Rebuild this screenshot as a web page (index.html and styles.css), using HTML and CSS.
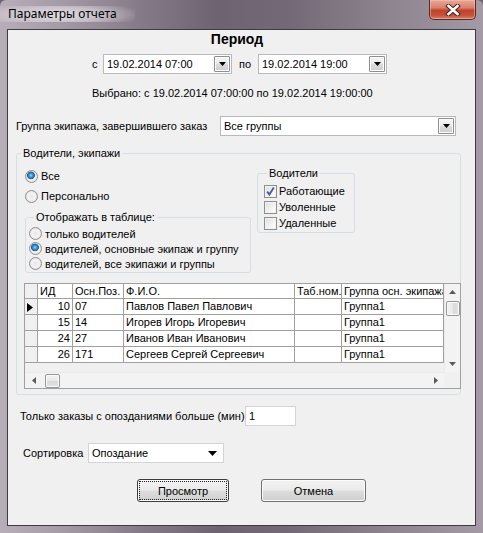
FILE: index.html
```html
<!DOCTYPE html>
<html lang="ru">
<head>
<meta charset="utf-8">
<title>Параметры отчета</title>
<link rel="stylesheet" href="styles.css">
</head>
<body>
<div class="window">
  <div class="titlebar">
    <span class="title">Параметры отчета</span>
    <div class="close-btn">
      <svg width="16" height="12" viewBox="0 0 16 12"><path d="M3.5 2 L12.5 10 M12.5 2 L3.5 10" stroke="#4a2424" stroke-width="4.6" stroke-linecap="square" fill="none"/><path d="M3.5 2 L12.5 10 M12.5 2 L3.5 10" stroke="#ffffff" stroke-width="2.6" stroke-linecap="square" fill="none"/></svg>
    </div>
  </div>
  <div class="client">
    <div class="period-title">Период</div>
    <div class="period-row">
      <span class="lbl-c">с</span>
      <div class="combo date">
        <span class="combo-text">19.02.2014 07:00</span>
        <span class="dd-btn"><svg width="7" height="4" viewBox="0 0 7 4"><path d="M0 0 H7 L3.5 4 Z" fill="#000"/></svg></span>
      </div>
      <span class="lbl-po">по</span>
      <div class="combo date">
        <span class="combo-text">19.02.2014 19:00</span>
        <span class="dd-btn"><svg width="7" height="4" viewBox="0 0 7 4"><path d="M0 0 H7 L3.5 4 Z" fill="#000"/></svg></span>
      </div>
    </div>
    <div class="selected">Выбрано: с 19.02.2014 07:00:00 по 19.02.2014 19:00:00</div>
    <div class="group-row">
      <span class="group-lbl">Группа экипажа, завершившего заказ</span>
      <div class="combo group">
        <span class="combo-text">Все группы</span>
        <span class="dd-btn"><svg width="7" height="4" viewBox="0 0 7 4"><path d="M0 0 H7 L3.5 4 Z" fill="#000"/></svg></span>
      </div>
    </div>

    <fieldset class="gbox drivers">
      <legend>Водители, экипажи</legend>
      <div class="top-area">
        <div class="left-col">
          <div class="radio-row"><span class="radio on"></span><span>Все</span></div>
          <div class="radio-row"><span class="radio"></span><span>Персонально</span></div>
          <fieldset class="gbox show">
            <legend>Отображать в таблице:</legend>
            <div class="radio-row small"><span class="radio"></span><span>только водителей</span></div>
            <div class="radio-row small"><span class="radio on"></span><span>водителей, основные экипаж и группу</span></div>
            <div class="radio-row small"><span class="radio"></span><span>водителей, все экипажи и группы</span></div>
          </fieldset>
        </div>
        <fieldset class="gbox drv">
          <legend>Водители</legend>
          <div class="check-row"><span class="check"><svg width="11" height="11" viewBox="0 0 11 11"><path d="M2.2 5.6 L4.4 8.6 L8.8 1.6" stroke="#4b5b9a" stroke-width="1.8" fill="none"/></svg></span><span>Работающие</span></div>
          <div class="check-row"><span class="check"></span><span>Уволенные</span></div>
          <div class="check-row"><span class="check"></span><span>Удаленные</span></div>
        </fieldset>
      </div>

      <div class="grid">
        <div class="grid-body">
          <table class="dgv">
            <thead>
              <tr>
                <th class="rh w0"></th>
                <th class="w1">ИД</th>
                <th class="w2">Осн.Поз.</th>
                <th class="w3">Ф.И.О.</th>
                <th class="w4">Таб.ном.</th>
                <th class="w5">Группа осн. экипажа</th>
              </tr>
            </thead>
            <tbody>
              <tr><td class="rh"><svg width="6" height="9" viewBox="0 0 6 9"><path d="M0 0 L6 4.5 L0 9 Z" fill="#000"/></svg></td><td class="num">10</td><td>07</td><td>Павлов Павел Павлович</td><td></td><td>Группа1</td></tr>
              <tr><td class="rh"></td><td class="num">15</td><td>14</td><td>Игорев Игорь Игоревич</td><td></td><td>Группа1</td></tr>
              <tr><td class="rh"></td><td class="num">24</td><td>27</td><td>Иванов Иван Иванович</td><td></td><td>Группа1</td></tr>
              <tr><td class="rh"></td><td class="num">26</td><td>171</td><td>Сергеев Сергей Сергеевич</td><td></td><td>Группа1</td></tr>
            </tbody>
          </table>
        </div>
        <div class="vscroll">
          <span class="arr"><svg width="7" height="4" viewBox="0 0 7 4"><path d="M0 4 H7 L3.5 0 Z" fill="#5a5a5a"/></svg></span>
          <span class="vthumb"></span>
          <span class="vfill"></span>
          <span class="arr"><svg width="7" height="4" viewBox="0 0 7 4"><path d="M0 0 H7 L3.5 4 Z" fill="#5a5a5a"/></svg></span>
        </div>
        <div class="hscroll">
          <span class="harr"><svg width="4" height="7" viewBox="0 0 4 7"><path d="M4 0 V7 L0 3.5 Z" fill="#5a5a5a"/></svg></span>
          <span class="hthumb"></span>
          <span class="hfill"></span>
          <span class="harr"><svg width="4" height="7" viewBox="0 0 4 7"><path d="M0 0 V7 L4 3.5 Z" fill="#5a5a5a"/></svg></span>
        </div>
        <div class="corner"></div>
      </div>
    </fieldset>

    <div class="late-row">
      <span class="late-lbl">Только заказы с опозданиями больше (мин)</span>
      <div class="textbox">1</div>
    </div>
    <div class="sort-row">
      <span class="sort-lbl">Сортировка</span>
      <div class="combo sort">
        <span class="combo-text">Опоздание</span>
        <span class="flat-arr"><svg width="9" height="5" viewBox="0 0 9 5"><path d="M0 0 H9 L4.5 5 Z" fill="#000"/></svg></span>
      </div>
    </div>
    <div class="buttons">
      <div class="btn default"><span class="focus">Просмотр</span></div>
      <div class="btn cancel">Отмена</div>
    </div>
  </div>
</div>
</body>
</html>
```
FILE: styles.css
```css
* { box-sizing: border-box; }
html, body { margin: 0; padding: 0; }
body {
  font-family: "Liberation Sans", Arial, sans-serif;
  font-size: 11px;
  color: #000;
  background: #6f6572;
}
.window {
  width: 483px;
  height: 533px;
  display: flex;
  flex-direction: column;
  border-radius: 6px 6px 0 0;
  background:
    linear-gradient(90deg, #b8aeb9 0%, #a69ca8 12%, #877d8a 28%, #6e6471 45%, #746a77 60%, #8d838f 80%, #a39aa5 100%);
}
.titlebar {
  height: 29px;
  display: flex;
  align-items: flex-start;
  justify-content: space-between;
}
.title {
  font-family: "Noto Sans", "Liberation Sans", sans-serif;
  font-size: 12px;
  line-height: 16px;
  color: #000;
  margin: 6px 0 0 0;
  padding: 0 18px 0 8px;
  background: radial-gradient(ellipse 60% 90% at 45% 55%, rgba(235,230,236,0.85) 0%, rgba(235,230,236,0.5) 55%, rgba(235,230,236,0) 100%);
}
.close-btn {
  width: 47px;
  height: 20px;
  margin-right: 7px;
  border: 1px solid #5b2a24;
  border-top: none;
  border-radius: 0 0 5px 5px;
  background: linear-gradient(#e9a898 0%, #d9826f 40%, #c0432c 55%, #c4513a 80%, #d8846c 100%);
  box-shadow: inset 0 0 0 1px rgba(255,200,190,0.45);
  display: flex;
  align-items: center;
  justify-content: center;
}
.client {
  flex: 1;
  margin: 0 7px 7px 7px;
  border: 1px solid #3f3b42;
  background: #f0f0f0;
  display: flex;
  flex-direction: column;
}
.period-title {
  margin-top: 1px;
  height: 16px;
  line-height: 16px;
  font-size: 14px;
  font-weight: bold;
  text-align: center;
  padding-right: 9px;
}
.period-row {
  margin-top: 7px;
  height: 20px;
  display: flex;
  align-items: center;
  padding-left: 84px;
}
.lbl-c { width: 11px; }
.lbl-po { width: 19px; margin-left: 7px; }
.combo {
  height: 20px;
  border: 1px solid #b7b9bd;
  background: #fff;
  display: flex;
  align-items: center;
  justify-content: space-between;
}
.combo.date { width: 129px; }
.combo-text { padding-left: 3px; white-space: nowrap; }
.dd-btn {
  width: 16px;
  height: 16px;
  margin-right: 1px;
  border: 1px solid #8e8f8f;
  border-radius: 1px;
  background: linear-gradient(#f6f6f6 0%, #e9e9e9 50%, #dcdcdc 51%, #cfcfcf 100%);
  box-shadow: inset 0 0 0 1px #fbfbfb;
  display: flex;
  align-items: center;
  justify-content: center;
}
.selected {
  margin-top: 12px;
  line-height: 14px;
  height: 14px;
  padding-left: 84px;
}
.group-row {
  margin-top: 16px;
  height: 20px;
  display: flex;
  align-items: center;
  padding-left: 8px;
}
.group-lbl { width: 204px; white-space: nowrap; }
.combo.group { width: 236px; }
.gbox {
  margin: 0;
  padding: 0;
  min-width: 0;
  border: 1px solid #d5dfe5;
  border-radius: 3px;
}
.gbox legend {
  padding: 0 2px;
  line-height: 14px;
  height: 14px;
}
.drivers {
  margin: 10px 14px 0 8px;
  padding-bottom: 5px;
}
.drivers > legend { margin-left: 4px; }
.top-area {
  margin-top: 6px;
  display: flex;
  align-items: flex-start;
}
.left-col {
  margin-left: 8px;
  width: 226px;
}
.radio-row {
  height: 20px;
  display: flex;
  align-items: center;
  white-space: nowrap;
}
.radio-row.small { height: 15px; }
.radio {
  width: 13px;
  height: 13px;
  border-radius: 50%;
  border: 1px solid #8e8f8f;
  background: radial-gradient(circle at 50% 50%, #e6e6e6 0%, #f4f4f4 45%, #d4d4d4 100%);
  margin-right: 3px;
  flex: none;
}
.radio.on {
  background:
    radial-gradient(circle at 45% 40%, #9bd3f5 0px, #3d8fd0 2px, #1d5e98 3.6px, rgba(0,0,0,0) 4.2px),
    radial-gradient(circle at 50% 50%, #e6e6e6 0%, #f4f4f4 45%, #d4d4d4 100%);
}
.show {
  margin-top: 4px;
  width: 226px;
  padding: 2px 0 1px 3px;
}
.show > legend { margin-left: 5px; }
.drv {
  margin-left: 6px;
  width: 98px;
  padding: 3px 0 1px 6px;
}
.drv > legend { margin-left: 3px; }
.check-row {
  height: 16px;
  display: flex;
  align-items: center;
  white-space: nowrap;
}
.check {
  width: 13px;
  height: 13px;
  border: 1px solid #8e8f8f;
  background: linear-gradient(135deg, #dcdcdc 0%, #f4f4f4 60%, #ffffff 100%);
  box-shadow: inset 0 0 0 1px #f2f2f2;
  margin-right: 2px;
  flex: none;
  display: flex;
  align-items: center;
  justify-content: center;
}
.grid {
  margin: 10px 0 0 7px;
  width: 437px;
  height: 106px;
  border: 1px solid #a0a0a0;
  display: grid;
  grid-template-columns: 1fr 16px;
  grid-template-rows: 1fr 16px;
  background: #f0f0f0;
}
.grid-body { overflow: hidden; background: #f0f0f0; }
.dgv {
  border-collapse: separate;
  border-spacing: 0;
  table-layout: fixed;
  width: 419px;
}
.dgv th, .dgv td {
  border-right: 1px solid #a0a0a0;
  border-bottom: 1px solid #a0a0a0;
  padding: 0 0 0 2px;
  font-weight: normal;
  text-align: left;
  white-space: nowrap;
  overflow: hidden;
  background: #fff;
}
.dgv th { height: 15px; line-height: 14px; }
.dgv td { height: 16px; line-height: 15px; }
.dgv .rh { background: #f0f0f0; padding: 0; }
.dgv td.rh svg { display: block; margin: 1px 0 0 2px; }
.dgv td.num { text-align: right; padding: 0 2px 0 0; }
.w0 { width: 13px; }
.w1 { width: 35px; }
.w2 { width: 51px; }
.w3 { width: 171px; }
.w4 { width: 47px; }
.w5 { width: 102px; }
.vscroll {
  background: #f3f3f3;
  border-left: 1px solid #eaeaea;
  display: flex;
  flex-direction: column;
  align-items: center;
}
.arr {
  height: 16px;
  width: 15px;
  display: flex;
  align-items: center;
  justify-content: center;
  flex: none;
}
.vthumb {
  width: 14px;
  height: 15px;
  margin-top: 1px;
  border: 1px solid #979797;
  border-radius: 2px;
  background: linear-gradient(90deg, #f2f2f2 0%, #e9e9e9 50%, #d8d8d8 51%, #e4e4e4 100%);
  box-shadow: inset 0 0 0 1px #fafafa;
  flex: none;
}
.vfill { flex: 1; }
.hscroll {
  background: #f3f3f3;
  border-top: 1px solid #eaeaea;
  display: flex;
  align-items: center;
}
.harr {
  width: 17px;
  height: 15px;
  display: flex;
  align-items: center;
  justify-content: center;
  flex: none;
}
.hthumb {
  width: 15px;
  height: 14px;
  margin-left: 3px;
  border: 1px solid #979797;
  border-radius: 2px;
  background: linear-gradient(#f2f2f2 0%, #e9e9e9 50%, #d8d8d8 51%, #e4e4e4 100%);
  box-shadow: inset 0 0 0 1px #fafafa;
  flex: none;
}
.hfill { flex: 1; }
.corner { background: #f0f0f0; }
.late-row {
  margin-top: 11px;
  height: 20px;
  display: flex;
  align-items: center;
  padding-left: 12px;
}
.late-lbl { width: 225px; white-space: nowrap; }
.textbox {
  width: 51px;
  height: 20px;
  border: 1px solid #d2d4d8;
  background: #fff;
  padding-left: 3px;
  line-height: 18px;
}
.sort-row {
  margin-top: 17px;
  height: 20px;
  display: flex;
  align-items: center;
  padding-left: 15px;
}
.sort-lbl { width: 65px; white-space: nowrap; }
.combo.sort { width: 136px; border-color: #d2d4d8; }
.flat-arr { margin-right: 6px; display: flex; }
.buttons {
  margin-top: 16px;
  display: flex;
  padding-left: 129px;
}
.btn {
  height: 23px;
  border: 1px solid #707070;
  border-radius: 3px;
  background: linear-gradient(#f2f2f2 0%, #ebebeb 48%, #dddddd 52%, #cfcfcf 100%);
  box-shadow: inset 0 0 0 1px #fcfcfc;
  display: flex;
  align-items: center;
  justify-content: center;
}
.btn.default { width: 92px; border-color: #3c3c3c; padding: 1px; }
.btn.cancel { width: 105px; margin-left: 32px; }
.focus {
  width: 100%;
  height: 100%;
  border: 1px dotted #222;
  display: flex;
  align-items: center;
  justify-content: center;
}
```
